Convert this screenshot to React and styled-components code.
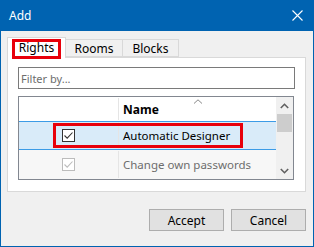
import React from "react";
import styled, { createGlobalStyle } from "styled-components";

const GlobalStyle = createGlobalStyle`
  html, body {
    margin: 0;
    padding: 0;
    background: #f0f0f0;
  }
  * {
    box-sizing: border-box;
  }
`;

const Window = styled.div`
  width: 314px;
  height: 247px;
  border: 1px solid #0063b1;
  border-top: none;
  background: #f0f0f0;
  display: flex;
  flex-direction: column;
  font-family: "Noto Sans", "Open Sans", sans-serif;
  font-size: 11px;
  color: #000;
`;

const TitleBar = styled.div`
  height: 31px;
  margin: 0 -1px;
  background: #0063b1;
  color: #fff;
  display: flex;
  align-items: center;
  justify-content: space-between;
  padding: 0 11px 0 9px;
  font-size: 12px;
`;

const Body = styled.div`
  flex: 1;
  display: flex;
  flex-direction: column;
  padding: 6px 7px 0 6px;
`;

const TabStrip = styled.div`
  display: flex;
  align-items: flex-end;
  height: 20px;
  position: relative;
  z-index: 1;
`;

const Tab = styled.div`
  position: relative;
  display: flex;
  align-items: center;
  justify-content: center;
  width: ${(p) => p.$w}px;
  height: ${(p) => (p.$active ? 21 : 18)}px;
  margin-bottom: ${(p) => (p.$active ? -1 : 0)}px;
  background: ${(p) => (p.$active ? "#fff" : "#f0f0f0")};
  border: 1px solid #d9d9d9;
  border-bottom: ${(p) => (p.$active ? "none" : "1px solid #d9d9d9")};
  border-left: ${(p) => (p.$first || p.$active ? "1px solid #d9d9d9" : "none")};
  padding-bottom: ${(p) => (p.$active ? 1 : 0)}px;
  font-size: 12px;
`;

const RedBox = styled.div`
  position: absolute;
  top: ${(p) => p.$top}px;
  left: ${(p) => p.$left}px;
  width: ${(p) => p.$w}px;
  height: ${(p) => p.$h}px;
  border: 3px solid #e8000b;
  pointer-events: none;
`;

const Panel = styled.div`
  width: 299px;
  height: 135px;
  background: #fff;
  border: 1px solid #d9d9d9;
  padding: 9px 10px 0 10px;
  display: flex;
  flex-direction: column;
  gap: 7px;
`;

const FilterInput = styled.div`
  height: 22px;
  border: 1px solid #7a7a7a;
  display: flex;
  align-items: center;
  padding-left: 2px;
  color: #6d6d6d;
`;

const Table = styled.div`
  width: 276px;
  height: 84px;
  border: 1px solid #828790;
  display: flex;
  overflow: hidden;
`;

const Grid = styled.div`
  flex: 1;
  display: flex;
  flex-direction: column;
`;

const Row = styled.div`
  position: relative;
  display: flex;
  height: ${(p) => p.$h}px;
  flex-shrink: 0;
  background: ${(p) => p.$bg || "#fff"};
  border-top: 1px solid ${(p) => (p.$selected ? "#3c9be6" : "transparent")};
  border-bottom: 1px solid ${(p) => (p.$selected ? "#3c9be6" : "transparent")};
`;

const Cell = styled.div`
  position: relative;
  display: flex;
  align-items: center;
  justify-content: ${(p) => (p.$center ? "center" : "flex-start")};
  width: ${(p) => (p.$w ? `${p.$w}px` : "auto")};
  flex: ${(p) => (p.$w ? "none" : 1)};
  padding-left: ${(p) => (p.$center ? 0 : 4)}px;
  border-right: ${(p) => (p.$sep ? "1px solid #e5e5e5" : "none")};
  color: ${(p) => (p.$muted ? "#6d6d6d" : "#000")};
  font-weight: ${(p) => (p.$bold ? 700 : 400)};
  font-size: ${(p) => (p.$bold ? 12 : 11.5)}px;
`;

const SortArrow = styled.svg`
  position: absolute;
  top: 1px;
  left: 50%;
  margin-left: -5px;
`;

const Check = styled.div`
  width: 13px;
  height: 13px;
  border: 1px solid ${(p) => (p.$disabled ? "#bcbcbc" : "#333")};
  background: #fff;
  display: flex;
  align-items: center;
  justify-content: center;
`;

const Scrollbar = styled.div`
  width: 17px;
  background: #f0f0f0;
  display: flex;
  flex-direction: column;
  align-items: center;
`;

const ScrollButton = styled.div`
  height: 17px;
  width: 17px;
  display: flex;
  align-items: center;
  justify-content: center;
  flex-shrink: 0;
`;

const Thumb = styled.div`
  width: 15px;
  height: 18px;
  background: #cdcdcd;
  flex-shrink: 0;
`;

const Track = styled.div`
  flex: 1;
`;

const Footer = styled.div`
  display: flex;
  justify-content: flex-end;
  gap: 7px;
  padding-top: 17px;
  width: 299px;
`;

const Button = styled.button`
  width: 75px;
  height: 22px;
  background: #e1e1e1;
  border: 1px solid #adadad;
  font-family: inherit;
  font-size: 12px;
  color: #000;
  padding: 0;
`;

function CheckMark({ color }) {
  return (
    <svg width="11" height="11" viewBox="0 0 11 11">
      <path d="M1.5 5.5 L4.2 8.2 L9.5 2.5" fill="none" stroke={color} strokeWidth="1.1" />
    </svg>
  );
}

function Chevron({ up }) {
  return (
    <svg width="9" height="6" viewBox="0 0 9 6">
      <path
        d={up ? "M0.8 5 L4.5 1.3 L8.2 5" : "M0.8 1 L4.5 4.7 L8.2 1"}
        fill="none"
        stroke="#606060"
        strokeWidth="1.6"
      />
    </svg>
  );
}

export default function App() {
  return (
    <>
      <GlobalStyle />
      <Window>
        <TitleBar>
          <span>Add</span>
          <svg width="11" height="11" viewBox="0 0 11 11">
            <path d="M0.5 0.5 L10.5 10.5 M10.5 0.5 L0.5 10.5" stroke="#fff" strokeWidth="1.1" />
          </svg>
        </TitleBar>
        <Body>
          <TabStrip>
            <Tab $w={59} $active $first>
              Rights
              <RedBox $top={1} $left={4} $w={49} $h={20} />
            </Tab>
            <Tab $w={57}>Rooms</Tab>
            <Tab $w={56}>Blocks</Tab>
          </TabStrip>
          <Panel>
            <FilterInput>Filter by...</FilterInput>
            <Table>
              <Grid>
                <Row $h={24}>
                  <Cell $w={100} $sep />
                  <Cell $bold>
                    Name
                    <SortArrow width="10" height="5" viewBox="0 0 10 5">
                      <path d="M1 4.5 L5 0.8 L9 4.5" fill="none" stroke="#888" strokeWidth="1" />
                    </SortArrow>
                  </Cell>
                </Row>
                <Row $h={29} $selected $bg="#d9ebf9">
                  <Cell $w={100} $sep $center>
                    <Check>
                      <CheckMark color="#333" />
                    </Check>
                  </Cell>
                  <Cell>Automatic Designer</Cell>
                  <RedBox $top={1} $left={34} $w={190} $h={25} />
                </Row>
                <Row $h={29} $bg="#f7f7f7">
                  <Cell $w={100} $sep $center>
                    <Check $disabled>
                      <CheckMark color="#bcbcbc" />
                    </Check>
                  </Cell>
                  <Cell $muted>Change own passwords</Cell>
                </Row>
              </Grid>
              <Scrollbar>
                <ScrollButton>
                  <Chevron up />
                </ScrollButton>
                <Thumb />
                <Track />
                <ScrollButton>
                  <Chevron />
                </ScrollButton>
              </Scrollbar>
            </Table>
          </Panel>
          <Footer>
            <Button>Accept</Button>
            <Button>Cancel</Button>
          </Footer>
        </Body>
      </Window>
    </>
  );
}
